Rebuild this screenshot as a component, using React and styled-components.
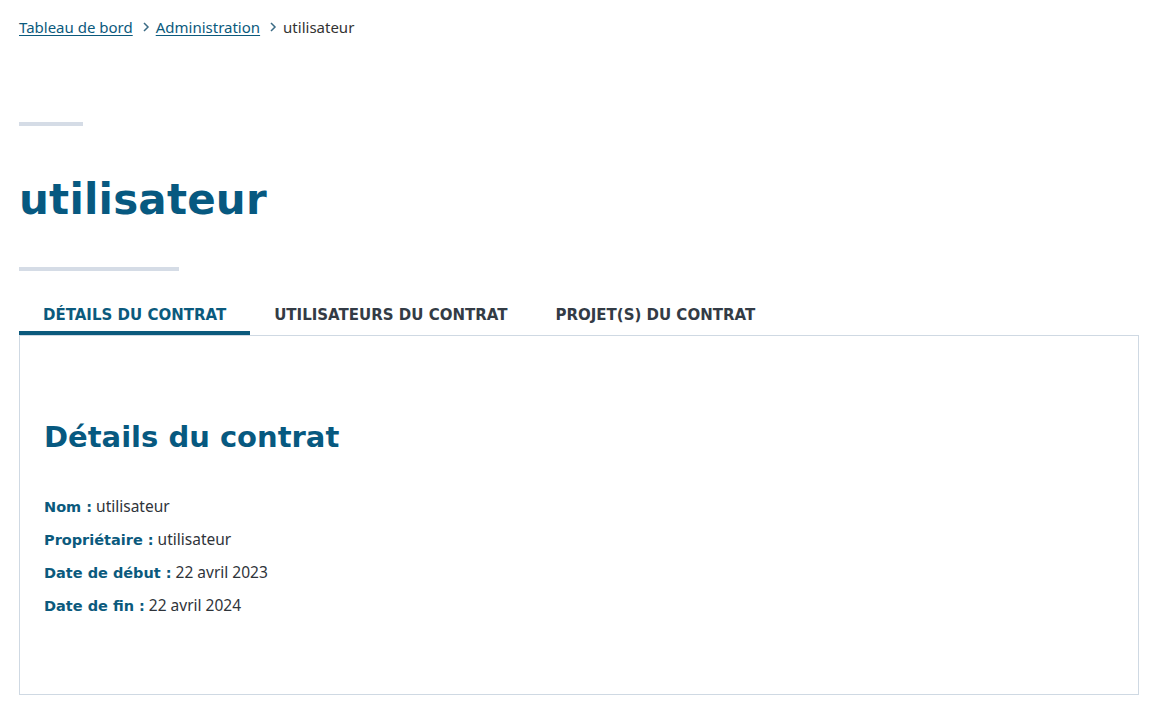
import styled, { createGlobalStyle } from "styled-components";

const GlobalStyle = createGlobalStyle`
    body {
        margin: 0;
        background: #ffffff;
        font-family: "Noto Sans", "Liberation Sans", sans-serif;
        color: #333333;
    }
`;

const Page = styled.div`
    padding: 14px 19px 16px 19px;
`;

const Breadcrumb = styled.nav`
    display: flex;
    align-items: center;
    gap: 6px;
    font-size: 15px;
    height: 26px;

    a {
        color: #0b5a7d;
        text-decoration: underline;
        text-underline-offset: 2px;
    }
`;

const Chevron = styled.span`
    display: inline-flex;
    color: #3b6b85;
    margin-left: 3px;
`;

const Current = styled.span`
    color: #333333;
`;

const Rule = styled.div`
    width: ${(p) => p.width}px;
    height: 4px;
    background: #d5dce6;
`;

const Header = styled.header`
    padding-top: 82px;
    display: flex;
    flex-direction: column;
`;

const Title = styled.h1`
    margin: 0;
    padding: 46px 0 39px;
    font-family: "DejaVu Sans", sans-serif;
    font-weight: 700;
    font-size: 42px;
    line-height: 56px;
    color: #075980;
    letter-spacing: 0.2px;
`;

const Tabs = styled.div`
    display: flex;
    margin-top: 28px;
`;

const Tab = styled.button`
    border: none;
    background: none;
    padding: 0 24px;
    height: 36px;
    font-family: "DejaVu Sans", sans-serif;
    font-size: 15px;
    font-weight: 600;
    color: ${(p) => (p.active ? "#0b5a7d" : "#333b45")};
    border-bottom: 4px solid ${(p) => (p.active ? "#0b5a7d" : "transparent")};
    cursor: pointer;
`;

const Panel = styled.section`
    border: 1px solid #cfd9e3;
    height: 360px;
    padding: 79px 24px 0;
    box-sizing: border-box;
`;

const PanelTitle = styled.h2`
    margin: 0 0 31px;
    font-family: "DejaVu Sans", sans-serif;
    font-weight: 600;
    font-size: 29px;
    line-height: 44px;
    color: #075980;
`;

const Field = styled.p`
    margin: 0;
    display: flex;
    align-items: baseline;
    gap: 4px;
    height: 33px;
    line-height: 33px;
    font-size: 15.5px;
    color: #2f343a;
`;

const Label = styled.span`
    font-family: "DejaVu Sans", sans-serif;
    font-weight: 700;
    font-size: 14.5px;
    color: #0b5a7d;
`;

const ChevronIcon = () => (
    <svg width="8" height="10" viewBox="0 0 8 10">
        <path d="M2 1 L6 5 L2 9" fill="none" stroke="currentColor" strokeWidth="1.5" />
    </svg>
);

const fields = [
    ["Nom", "utilisateur"],
    ["Propriétaire", "utilisateur"],
    ["Date de début", "22 avril 2023"],
    ["Date de fin", "22 avril 2024"],
];

const App = () => {
    return (
        <Page>
            <GlobalStyle />
            <Breadcrumb>
                <a href="#">Tableau de bord</a>
                <Chevron><ChevronIcon /></Chevron>
                <a href="#">Administration</a>
                <Chevron><ChevronIcon /></Chevron>
                <Current>utilisateur</Current>
            </Breadcrumb>
            <Header>
                <Rule width={64} />
                <Title>utilisateur</Title>
                <Rule width={160} />
            </Header>
            <Tabs>
                <Tab active>DÉTAILS DU CONTRAT</Tab>
                <Tab>UTILISATEURS DU CONTRAT</Tab>
                <Tab>PROJET(S) DU CONTRAT</Tab>
            </Tabs>
            <Panel>
                <PanelTitle>Détails du contrat</PanelTitle>
                {fields.map(([label, value]) => (
                    <Field key={label}>
                        <Label>{label} :</Label>
                        <span>{value}</span>
                    </Field>
                ))}
            </Panel>
        </Page>
    );
};

export default App;
